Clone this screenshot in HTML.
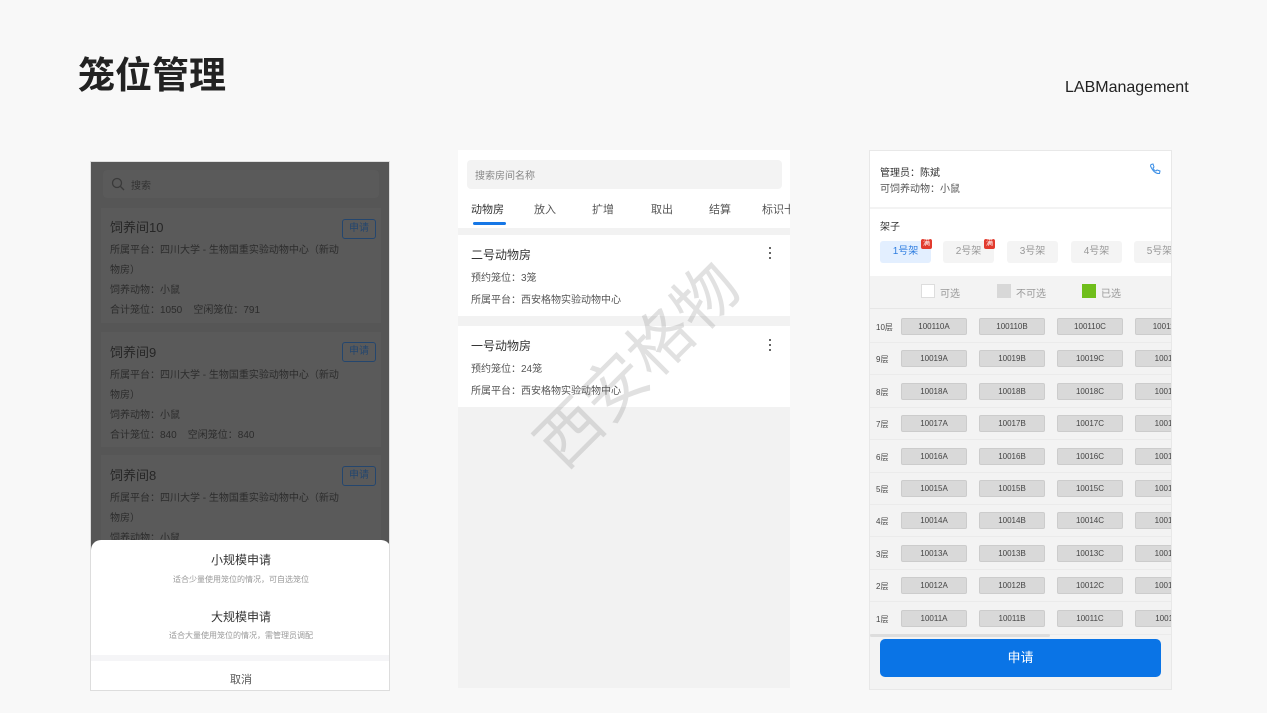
<!DOCTYPE html>
<html><head><meta charset="utf-8"><style>
*{margin:0;padding:0;box-sizing:border-box}
body{width:1267px;height:713px;background:#f8f8f8;font-family:"Liberation Sans","Noto Sans CJK SC",sans-serif;position:relative;overflow:hidden;color:#333}
.a{position:absolute}
.t{white-space:nowrap}
</style></head><body>
<div class="a t" style="left:78px;top:54px;font-size:37px;font-weight:bold;color:#222;line-height:44px">笼位管理</div>
<div class="a t" style="left:1065px;top:79px;font-size:16px;color:#222">LABManagement</div>

<!-- panel 1 -->
<div class="a" style="left:90px;top:161px;width:300px;height:530px;background:#565656;border:1px solid #ddd;overflow:hidden">
  <div class="a" style="left:12px;top:8px;width:276px;height:28px;background:#5a5a5a;border-radius:4px"></div>
  <svg class="a" style="left:20px;top:15px" width="14" height="14"><circle cx="6" cy="6" r="4.5" fill="none" stroke="#3a3a3a" stroke-width="1.3"/><line x1="9.5" y1="9.5" x2="13" y2="13" stroke="#3a3a3a" stroke-width="1.3"/></svg>
  <div class="a t" style="left:40px;top:15px;font-size:10px;color:#333">搜索</div>
  <div class="a" style="left:10px;top:46px;width:280px;height:115px;background:#5a5a5a"></div>
  <div class="a" style="left:10px;top:170px;width:280px;height:115px;background:#5a5a5a"></div>
  <div class="a" style="left:10px;top:293px;width:280px;height:240px;background:#5a5a5a"></div>
  <div class="a" style="left:19px;top:56px;font-size:12px;color:#262626;line-height:20px;width:230px">
    <div style="font-size:13px;height:23px">饲养间10</div>
    <div style="font-size:10px;color:#2c2c2c">所属平台：四川大学 - 生物国重实验动物中心（新动物房）</div>
    <div style="font-size:10px;color:#2c2c2c">饲养动物：小鼠</div>
    <div style="font-size:10px;color:#2c2c2c">合计笼位：1050 &nbsp;&nbsp;&nbsp;空闲笼位：791</div>
  </div>
  <div class="a" style="left:19px;top:181px;font-size:12px;color:#262626;line-height:20px;width:230px">
    <div style="font-size:13px;height:23px">饲养间9</div>
    <div style="font-size:10px;color:#2c2c2c">所属平台：四川大学 - 生物国重实验动物中心（新动物房）</div>
    <div style="font-size:10px;color:#2c2c2c">饲养动物：小鼠</div>
    <div style="font-size:10px;color:#2c2c2c">合计笼位：840 &nbsp;&nbsp;&nbsp;空闲笼位：840</div>
  </div>
  <div class="a" style="left:19px;top:304px;font-size:12px;color:#262626;line-height:20px;width:230px">
    <div style="font-size:13px;height:23px">饲养间8</div>
    <div style="font-size:10px;color:#2c2c2c">所属平台：四川大学 - 生物国重实验动物中心（新动物房）</div>
    <div style="font-size:10px;color:#2c2c2c">饲养动物：小鼠</div>
  </div>
  <div class="a t" style="left:251px;top:57px;width:34px;height:20px;border:1px solid #24466e;border-radius:3px;font-size:10px;color:#24466e;text-align:center;line-height:18px">申请</div>
  <div class="a t" style="left:251px;top:180px;width:34px;height:20px;border:1px solid #24466e;border-radius:3px;font-size:10px;color:#24466e;text-align:center;line-height:18px">申请</div>
  <div class="a t" style="left:251px;top:304px;width:34px;height:20px;border:1px solid #24466e;border-radius:3px;font-size:10px;color:#24466e;text-align:center;line-height:18px">申请</div>
  <div class="a" style="left:0;top:378px;width:300px;height:152px;background:#fff;border-radius:10px 10px 0 0">
    <div class="a t" style="left:0;width:300px;top:11px;text-align:center;font-size:12px;color:#333">小规模申请</div>
    <div class="a t" style="left:0;width:300px;top:34px;text-align:center;font-size:8px;color:#999">适合少量使用笼位的情况，可自选笼位</div>
    <div class="a t" style="left:0;width:300px;top:68px;text-align:center;font-size:12px;color:#333">大规模申请</div>
    <div class="a t" style="left:0;width:300px;top:90px;text-align:center;font-size:8px;color:#999">适合大量使用笼位的情况，需管理员调配</div>
    <div class="a" style="left:0;top:115px;width:300px;height:6px;background:#f5f5f7"></div>
    <div class="a t" style="left:0;width:300px;top:131px;text-align:center;font-size:11px;color:#555">取消</div>
  </div>
</div>

<!-- panel 2 -->
<div class="a" style="left:458px;top:150px;width:332px;height:538px;background:#f2f2f2;overflow:hidden">
  <div class="a" style="left:0;top:0;width:332px;height:78px;background:#fff"></div>
  <div class="a" style="left:9px;top:10px;width:315px;height:29px;background:#f3f3f3;border-radius:4px"></div>
  <div class="a t" style="left:17px;top:17px;font-size:10px;color:#888">搜索房间名称</div>
  <div class="a t" style="left:13px;top:51px;font-size:11px;color:#555">
    <span style="position:absolute;left:0;color:#333">动物房</span><span style="position:absolute;left:63px">放入</span><span style="position:absolute;left:121px">扩增</span><span style="position:absolute;left:180px">取出</span><span style="position:absolute;left:238px">结算</span><span style="position:absolute;left:291px">标识卡</span>
  </div>
  <div class="a" style="left:15px;top:72px;width:33px;height:3px;background:#1677e6;border-radius:2px"></div>
  <div class="a" style="left:0;top:85px;width:332px;height:81px;background:#fff"></div>
  <div class="a" style="left:0;top:176px;width:332px;height:81px;background:#fff"></div>
  <div class="a t" style="left:13px;top:96px;font-size:12px;color:#333">二号动物房</div>
  <div class="a t" style="left:13px;top:119px;font-size:10px;color:#555">预约笼位：3笼</div>
  <div class="a t" style="left:13px;top:141px;font-size:10px;color:#555">所属平台：西安格物实验动物中心</div>
  <div class="a t" style="left:13px;top:187px;font-size:12px;color:#333">一号动物房</div>
  <div class="a t" style="left:13px;top:210px;font-size:10px;color:#555">预约笼位：24笼</div>
  <div class="a t" style="left:13px;top:232px;font-size:10px;color:#555">所属平台：西安格物实验动物中心</div>
  <div class="a" style="left:311px;top:97px;width:2px;line-height:0"><div style="width:2px;height:2px;background:#666;margin-bottom:3px"></div><div style="width:2px;height:2px;background:#666;margin-bottom:3px"></div><div style="width:2px;height:2px;background:#666"></div></div>
  <div class="a" style="left:311px;top:189px;width:2px;line-height:0"><div style="width:2px;height:2px;background:#666;margin-bottom:3px"></div><div style="width:2px;height:2px;background:#666;margin-bottom:3px"></div><div style="width:2px;height:2px;background:#666"></div></div>
  <div class="a t" style="left:40px;top:180px;font-size:64px;color:rgba(120,120,120,0.22);transform:rotate(-45deg);transform-origin:center;width:280px;text-align:center;line-height:70px">西安格物</div>
</div>

<!-- panel 3 -->
<div class="a" style="left:869px;top:150px;width:303px;height:540px;background:#f3f3f3;border:1px solid #e8e8e8;overflow:hidden">
  <div class="a" style="left:0;top:0;width:303px;height:56px;background:#fff"></div>
  <div class="a t" style="left:10px;top:13px;font-size:10px;color:#333">管理员：陈斌</div>
  <div class="a t" style="left:10px;top:29px;font-size:10px;color:#555">可饲养动物：小鼠</div>
  <svg class="a" style="left:279px;top:12px" width="12" height="12" viewBox="0 0 12 12"><path d="M2 1.5 L4 1 L5 4 L4 5 Q5 7.5 7 8 L8 7 L11 8 L10.5 10.5 Q5 11 1.5 3 Z" fill="none" stroke="#3a8ee6" stroke-width="1"/></svg>
  <div class="a" style="left:0;top:58px;width:303px;height:67px;background:#fff"></div>
  <div class="a t" style="left:10px;top:67px;font-size:10px;color:#333">架子</div>
  <div class="a t" style="left:10px;top:90px;width:51px;height:22px;background:#e3efff;border-radius:3px;font-size:10px;color:#2e7de0;text-align:center;line-height:22px">1号架</div>
  <div class="a t" style="left:73px;top:90px;width:51px;height:22px;background:#f4f4f4;border-radius:3px;font-size:10px;color:#999;text-align:center;line-height:22px">2号架</div>
  <div class="a t" style="left:137px;top:90px;width:51px;height:22px;background:#f4f4f4;border-radius:3px;font-size:10px;color:#999;text-align:center;line-height:22px">3号架</div>
  <div class="a t" style="left:201px;top:90px;width:51px;height:22px;background:#f4f4f4;border-radius:3px;font-size:10px;color:#999;text-align:center;line-height:22px">4号架</div>
  <div class="a t" style="left:264px;top:90px;width:51px;height:22px;background:#f4f4f4;border-radius:3px;font-size:10px;color:#999;text-align:center;line-height:22px">5号架</div>
  <div class="a t" style="left:51px;top:88px;width:11px;height:10px;background:#e23b2e;border-radius:2px;font-size:7px;color:#fff;text-align:center;line-height:10px">满</div>
  <div class="a t" style="left:114px;top:88px;width:11px;height:10px;background:#e23b2e;border-radius:2px;font-size:7px;color:#fff;text-align:center;line-height:10px">满</div>
  <div class="a" style="left:51px;top:133px;width:14px;height:14px;background:#fff;border:1px solid #ddd"></div>
  <div class="a t" style="left:70px;top:134px;font-size:10px;color:#999">可选</div>
  <div class="a" style="left:127px;top:133px;width:14px;height:14px;background:#d8d8d8"></div>
  <div class="a t" style="left:146px;top:134px;font-size:10px;color:#999">不可选</div>
  <div class="a" style="left:212px;top:133px;width:14px;height:14px;background:#6fbe1b"></div>
  <div class="a t" style="left:231px;top:134px;font-size:10px;color:#999">已选</div>
  <div class="a" style="left:0;top:157px;width:303px;height:1px;background:#e6e6e6"></div>
  <div id="rows"></div>
  <div class="a" style="left:0;top:483px;width:180px;height:3px;background:#ddd;border-radius:2px"></div>
  <div class="a t" style="left:10px;top:488px;width:281px;height:38px;background:#0a74e6;border-radius:5px;color:#fff;font-size:13px;text-align:center;line-height:38px">申请</div>
</div>
<script>
var h='';for(var i=10;i>=1;i--){var y=167+(10-i)*32.4;var n='1001'+i;
h+='<div class="a t" style="left:6px;top:'+(y+4)+'px;font-size:8px;color:#444">'+i+'层</div>';
h+='<div class="a" style="left:0;top:'+(y+24)+'px;width:303px;height:1px;background:#ebebeb"></div>';
['A','B','C','X'].forEach(function(s,k){var x=31+k*78;var txt=s=='X'?n+'1':n+s;
h+='<div class="a t" style="left:'+x+'px;top:'+y+'px;width:66px;height:17px;background:#d9d9d9;border:1px solid #ccc;border-radius:2px;font-size:8px;color:#444;text-align:center;line-height:15px">'+txt+'</div>';});}
document.getElementById('rows').innerHTML=h;
</script>
</body></html>
